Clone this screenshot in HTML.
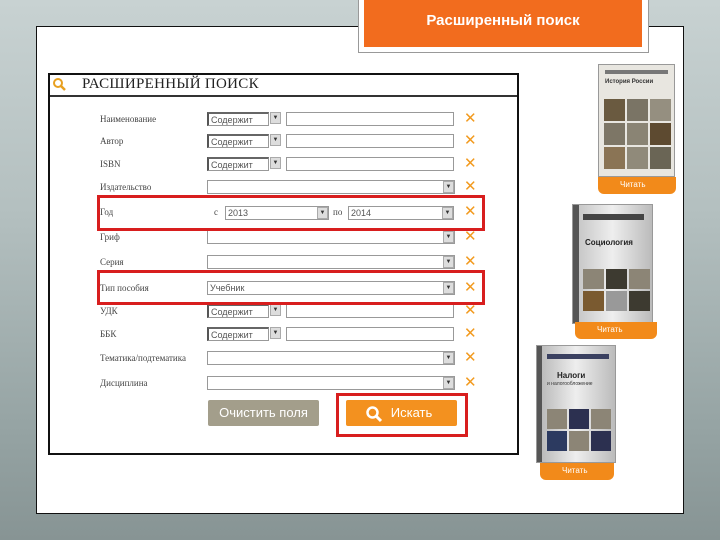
<!DOCTYPE html>
<html><head><meta charset="utf-8"><style>
*{margin:0;padding:0;box-sizing:border-box}
body{width:720px;height:540px;overflow:hidden;position:relative;background:linear-gradient(180deg,#c8d2d2 0%,#b3bfbf 40%,#95a3a3 80%,#879494 100%);font-family:"Liberation Sans","DejaVu Sans",sans-serif}
.abs{position:absolute}
#panel{left:36px;top:26px;width:648px;height:488px;background:#fff;border:1px solid #111}
#tbox{left:358px;top:-2px;width:291px;height:55px;background:#fff;border:1px solid #999}
#tfill{left:364px;top:0;width:278px;height:47px;background:#f26c1e;color:#fff;font-size:15px;font-weight:bold;text-align:center;line-height:42px}
#form{left:48px;top:73px;width:471px;height:382px;border:2px solid #111}
.title{left:53px;top:76px;font-family:"Liberation Serif",serif;font-size:15px;color:#222;letter-spacing:.3px}
.tline{left:50px;top:95px;width:467px;height:2px;background:#333}
.lab{font-size:9px;color:#444;font-family:"Liberation Serif",serif}
.sel{height:14px;border:1px solid #999;background:#fff;font-size:9px;color:#555;padding-left:2px;line-height:12px}
.sel.d{border-left:2px solid #555;border-top:2px solid #666}
.arr{width:11px;height:12px;background:#ddd;border:1px solid #aaa;font-size:6px;text-align:center;line-height:10px;color:#333}
.x{color:#f29a1e;font-size:15px;font-weight:bold;line-height:14px}
.red{border:3px solid #d81e1e}
.btn{font-size:13px;color:#fff;text-align:center;line-height:26px;border-radius:2px}
.book{border:1px solid #999}
.rib{background:#f28a1a;color:#fff;font-size:8px;line-height:16px;padding-left:22px}
</style></head><body>
<div class="abs" id="panel"></div>
<div class="abs" id="tbox"></div>
<div class="abs" id="tfill">Расширенный поиск</div>
<div class="abs" id="form"></div>
<svg class="abs" style="left:52px;top:77px" width="14" height="14"><circle cx="6" cy="6" r="4" fill="none" stroke="#e8a020" stroke-width="2"/><line x1="9" y1="9" x2="13" y2="13" stroke="#e8a020" stroke-width="2.5"/></svg>
<div class="abs title" style="left:82px">РАСШИРЕННЫЙ ПОИСК</div>
<div class="abs tline"></div>

<div class="abs lab" style="left:100px;top:114px">Наименование</div>
<div class="abs lab" style="left:100px;top:136px">Автор</div>
<div class="abs lab" style="left:100px;top:159px">ISBN</div>
<div class="abs lab" style="left:100px;top:182px">Издательство</div>
<div class="abs lab" style="left:100px;top:207px">Год</div>
<div class="abs lab" style="left:100px;top:232px">Гриф</div>
<div class="abs lab" style="left:100px;top:257px">Серия</div>
<div class="abs lab" style="left:100px;top:283px">Тип пособия</div>
<div class="abs lab" style="left:100px;top:306px">УДК</div>
<div class="abs lab" style="left:100px;top:329px">ББК</div>
<div class="abs lab" style="left:100px;top:353px">Тематика/подтематика</div>
<div class="abs lab" style="left:100px;top:378px">Дисциплина</div>

<div class="abs sel d" style="left:207px;top:112px;width:62px">Содержит</div><div class="abs arr" style="left:270px;top:112px">▼</div><div class="abs sel" style="left:286px;top:112px;width:168px"></div>
<div class="abs sel d" style="left:207px;top:134px;width:62px">Содержит</div><div class="abs arr" style="left:270px;top:134px">▼</div><div class="abs sel" style="left:286px;top:134px;width:168px"></div>
<div class="abs sel d" style="left:207px;top:157px;width:62px">Содержит</div><div class="abs arr" style="left:270px;top:157px">▼</div><div class="abs sel" style="left:286px;top:157px;width:168px"></div>
<div class="abs sel d" style="left:207px;top:304px;width:62px">Содержит</div><div class="abs arr" style="left:270px;top:304px">▼</div><div class="abs sel" style="left:286px;top:304px;width:168px"></div>
<div class="abs sel d" style="left:207px;top:327px;width:62px">Содержит</div><div class="abs arr" style="left:270px;top:327px">▼</div><div class="abs sel" style="left:286px;top:327px;width:168px"></div>
<div class="abs sel" style="left:207px;top:180px;width:248px"></div><div class="abs arr" style="left:443px;top:181px">▼</div>
<div class="abs sel" style="left:207px;top:230px;width:248px"></div><div class="abs arr" style="left:443px;top:231px">▼</div>
<div class="abs sel" style="left:207px;top:255px;width:248px"></div><div class="abs arr" style="left:443px;top:256px">▼</div>
<div class="abs sel" style="left:207px;top:281px;width:248px">Учебник</div><div class="abs arr" style="left:443px;top:282px">▼</div>
<div class="abs sel" style="left:207px;top:351px;width:248px"></div><div class="abs arr" style="left:443px;top:352px">▼</div>
<div class="abs sel" style="left:207px;top:376px;width:248px"></div><div class="abs arr" style="left:443px;top:377px">▼</div>
<div class="abs lab" style="left:214px;top:207px">с</div>
<div class="abs sel" style="left:225px;top:206px;width:104px">2013</div><div class="abs arr" style="left:317px;top:207px">▼</div>
<div class="abs lab" style="left:333px;top:207px">по</div>
<div class="abs sel" style="left:348px;top:206px;width:106px">2014</div><div class="abs arr" style="left:442px;top:207px">▼</div>

<div class="abs x" style="left:464px;top:112px">✕</div>
<div class="abs x" style="left:464px;top:134px">✕</div>
<div class="abs x" style="left:464px;top:157px">✕</div>
<div class="abs x" style="left:464px;top:180px">✕</div>
<div class="abs x" style="left:464px;top:205px">✕</div>
<div class="abs x" style="left:464px;top:230px">✕</div>
<div class="abs x" style="left:464px;top:255px">✕</div>
<div class="abs x" style="left:464px;top:281px">✕</div>
<div class="abs x" style="left:464px;top:304px">✕</div>
<div class="abs x" style="left:464px;top:327px">✕</div>
<div class="abs x" style="left:464px;top:351px">✕</div>
<div class="abs x" style="left:464px;top:376px">✕</div>

<div class="abs red" style="left:97px;top:195px;width:388px;height:36px"></div>
<div class="abs red" style="left:97px;top:270px;width:388px;height:35px"></div>

<div class="abs btn" style="left:208px;top:400px;width:111px;height:26px;background:#a39e8b">Очистить поля</div>
<div class="abs red" style="left:336px;top:393px;width:132px;height:44px"></div>
<div class="abs btn" style="left:346px;top:400px;width:111px;height:26px;background:#f3911f;padding-left:20px">Искать</div>
<svg class="abs" style="left:365px;top:405px" width="18" height="18"><circle cx="7.5" cy="7.5" r="5" fill="none" stroke="#fff" stroke-width="2.5"/><line x1="11" y1="11" x2="16" y2="16" stroke="#fff" stroke-width="3"/></svg>

<div class="abs book" style="left:598px;top:64px;width:77px;height:113px;background:#e8e6e0">
<div style="margin:5px 6px;height:4px;background:#777"></div>
<div style="margin:4px 6px;font-size:6px;font-weight:bold;color:#333">История России</div>
<div style="display:grid;grid-template-columns:repeat(3,21px);gap:2px;margin:14px 5px 0">
<div style="height:22px;background:#6a5a40"></div><div style="height:22px;background:#7a7465"></div><div style="height:22px;background:#958f80"></div>
<div style="height:22px;background:#7d7666"></div><div style="height:22px;background:#8a8474"></div><div style="height:22px;background:#5d4a30"></div>
<div style="height:22px;background:#8a7455"></div><div style="height:22px;background:#908a7a"></div><div style="height:22px;background:#6a6555"></div></div></div>
<div class="abs rib" style="left:598px;top:177px;width:78px;height:17px;border-radius:0 0 6px 6px">Читать</div>

<div class="abs book" style="left:572px;top:204px;width:81px;height:120px;background:linear-gradient(90deg,#555 0,#555 6px,#c8c8c8 6px,#eee 50%,#bbb)">
<div style="margin:9px 8px 0 10px;height:6px;background:#444"></div>
<div style="margin:18px 0 0 12px;font-size:8px;font-weight:bold;color:#222">Социология</div>
<div style="display:grid;grid-template-columns:repeat(3,21px);gap:2px;margin:22px 6px 0 10px">
<div style="height:20px;background:#8c8576"></div><div style="height:20px;background:#3d3a30"></div><div style="height:20px;background:#8c8576"></div>
<div style="height:20px;background:#7a5a30"></div><div style="height:20px;background:#999"></div><div style="height:20px;background:#3d3a30"></div></div></div>
<div class="abs rib" style="left:575px;top:322px;width:82px;height:17px;border-radius:0 0 6px 6px">Читать</div>

<div class="abs book" style="left:536px;top:345px;width:80px;height:118px;background:linear-gradient(90deg,#555 0,#555 5px,#bbb 5px,#eee 50%,#bbb)">
<div style="margin:8px 6px 0 10px;height:5px;background:#3a4060"></div>
<div style="margin:12px 0 0 20px;font-size:8px;font-weight:bold;color:#222">Налоги</div>
<div style="margin:1px 0 0 10px;font-size:5px;color:#333">и налогообложение</div>
<div style="display:grid;grid-template-columns:repeat(3,20px);gap:2px;margin:22px 6px 0 10px">
<div style="height:20px;background:#8c8576"></div><div style="height:20px;background:#2c3050"></div><div style="height:20px;background:#8c8576"></div>
<div style="height:20px;background:#2c3a60"></div><div style="height:20px;background:#8c8576"></div><div style="height:20px;background:#2c3050"></div></div></div>
<div class="abs rib" style="left:540px;top:463px;width:74px;height:17px;border-radius:0 0 6px 6px">Читать</div>
</body></html>
